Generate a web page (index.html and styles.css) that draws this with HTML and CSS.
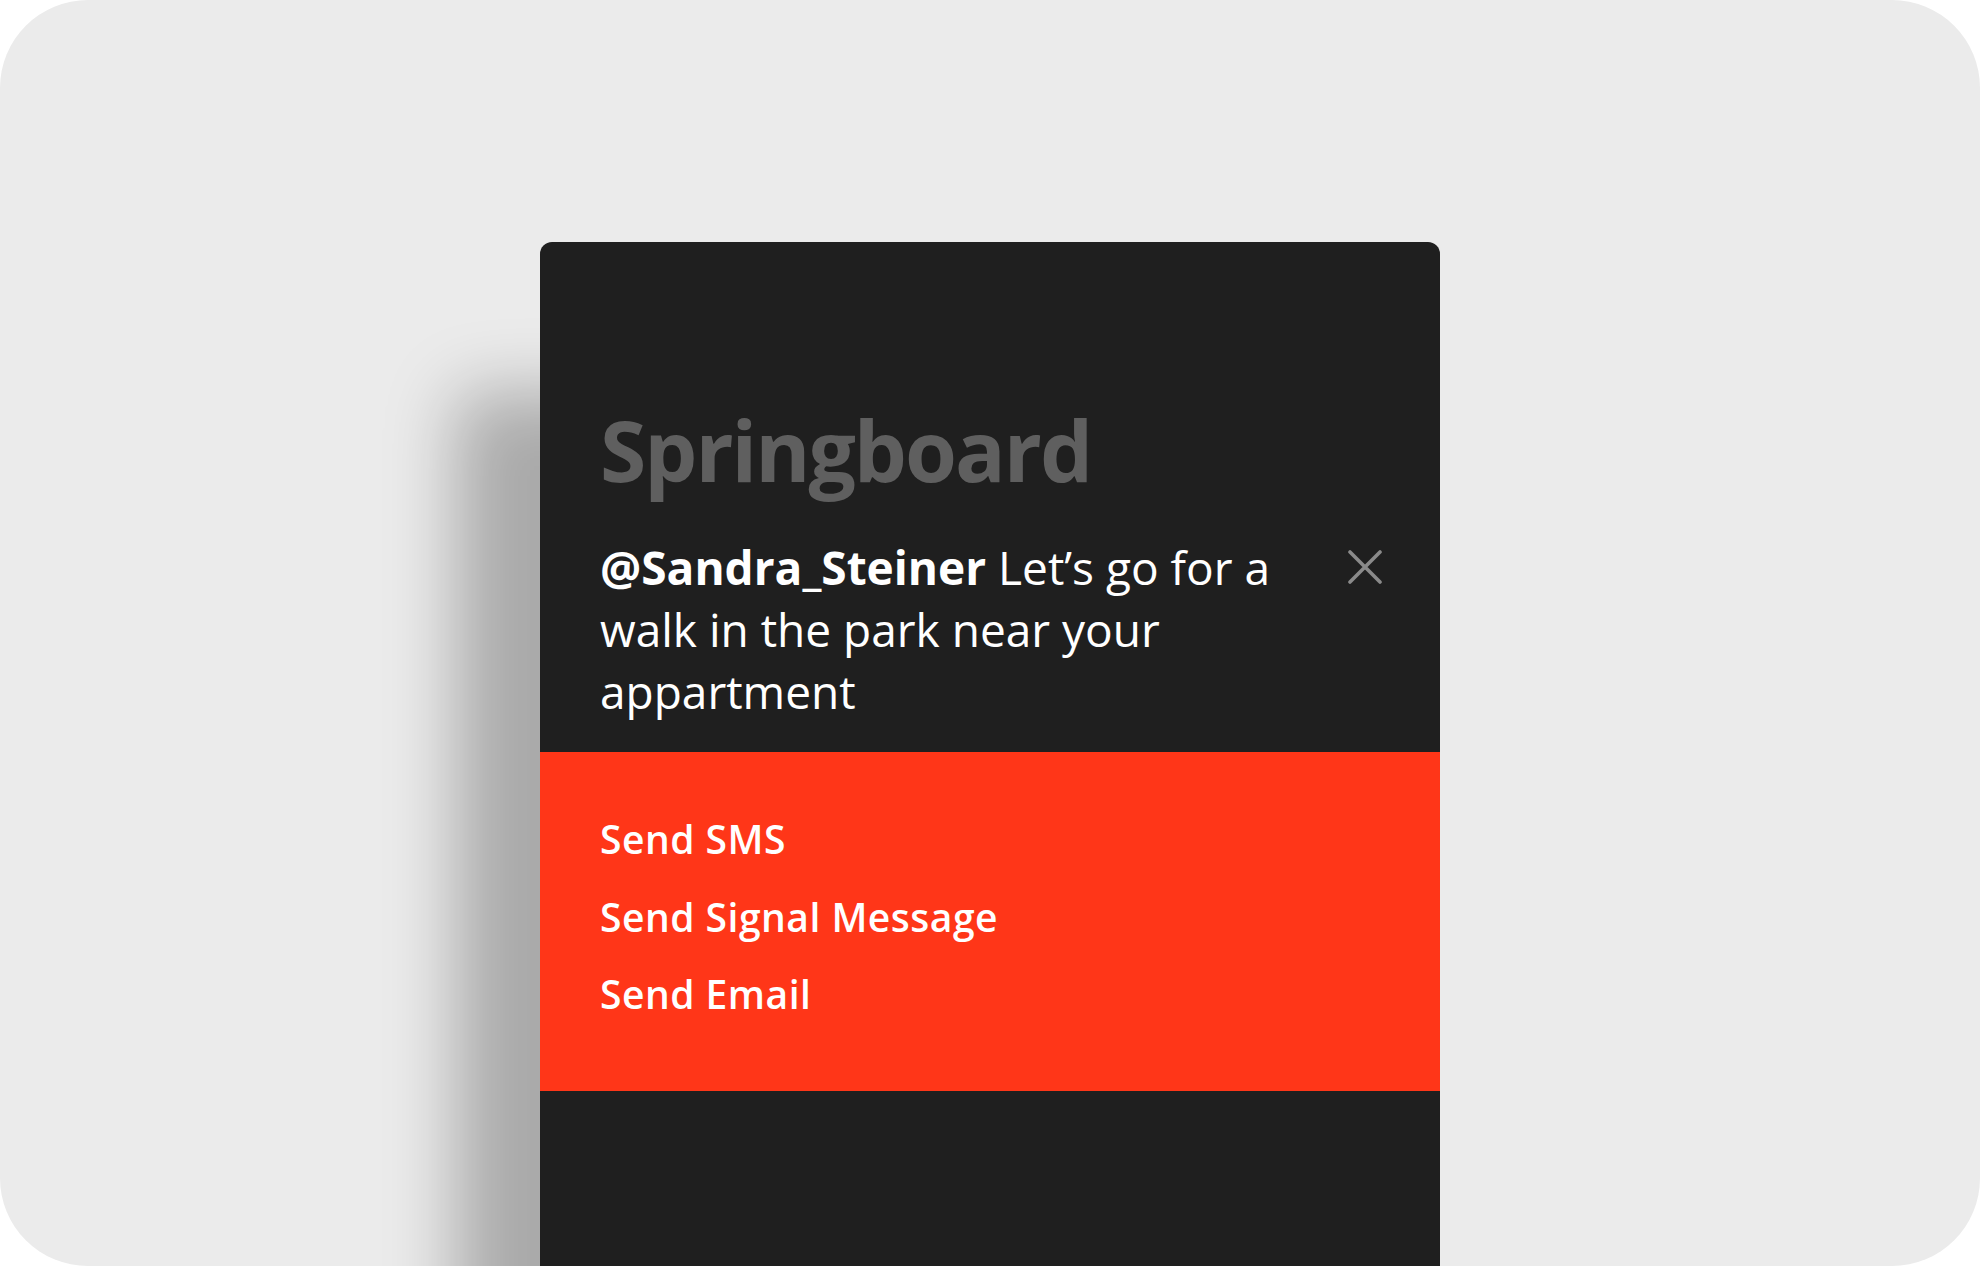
FILE: index.html
```html
<!DOCTYPE html>
<html lang="en">
<head>
<meta charset="UTF-8">
<meta name="viewport" content="width=device-width, initial-scale=1.0">
<link rel="stylesheet" href="styles.css">
</head>
<body>

<div class="frame">
    <div class="panel">
        <h1 class="title">Springboard</h1>

        <div class="notice">
            <p class="message"><b>@Sandra_Steiner</b> Let’s go for a walk in the park near your appartment</p>
            <button class="close" aria-label="Close">
                <svg width="34" height="34" viewBox="0 0 34 34">
                    <path d="M2 2 L32 32 M32 2 L2 32" stroke="#8a8a8a" stroke-width="3.6" stroke-linecap="round" fill="none"/>
                </svg>
            </button>
        </div>

        <!-- actions for the notification -->
        <ul class="actions">
            <li>Send SMS</li>
            <li>Send Signal Message</li>
            <li>Send Email</li>
        </ul>
    </div>
</div>

</body>
</html>
```

FILE: styles.css
```css
* {
    box-sizing: border-box;
}
body {
    margin: 0;
    background-color: #ffffff;
    font-family: "Open Sans", "Noto Sans", sans-serif;
}
.frame {
    width: 1980px;
    height: 1266px;
    border-radius: 88px;
    background-color: #ebebeb;
    overflow: hidden;
    padding-top: 242px;
}
.panel {
    width: 900px;
    height: 1100px;
    margin-left: 540px;
    background-color: #1f1f1f;
    border-radius: 12px 12px 0 0;
    box-shadow: -84px 150px 70px rgba(0, 0, 0, 0.28);
    padding-top: 158px;
}
.title {
    margin: 0 0 36px 60px;
    font-size: 84px;
    line-height: 100px;
    font-weight: 700;
    color: #5f5f5f;
    letter-spacing: -2px;
}
.notice {
    display: flex;
    align-items: flex-start;
    padding: 0 58px 30px 60px;
}
.message {
    margin: 0;
    flex: 1;
    max-width: 700px;
    font-size: 46px;
    line-height: 62px;
    color: #ffffff;
}
.message b {
    font-weight: 700;
}
.close {
    margin: 14px 0 0 auto;
    padding: 0;
    border: none;
    background: none;
    width: 34px;
    height: 34px;
}
.close svg {
    display: block;
}
.actions {
    list-style: none;
    margin: 0;
    padding: 48px 60px 58px 60px;
    background-color: #ff3618;
}
.actions li {
    font-size: 39px;
    line-height: 77.5px;
    font-weight: 600;
    color: #ffffff;
    letter-spacing: 0.5px;
}
```
